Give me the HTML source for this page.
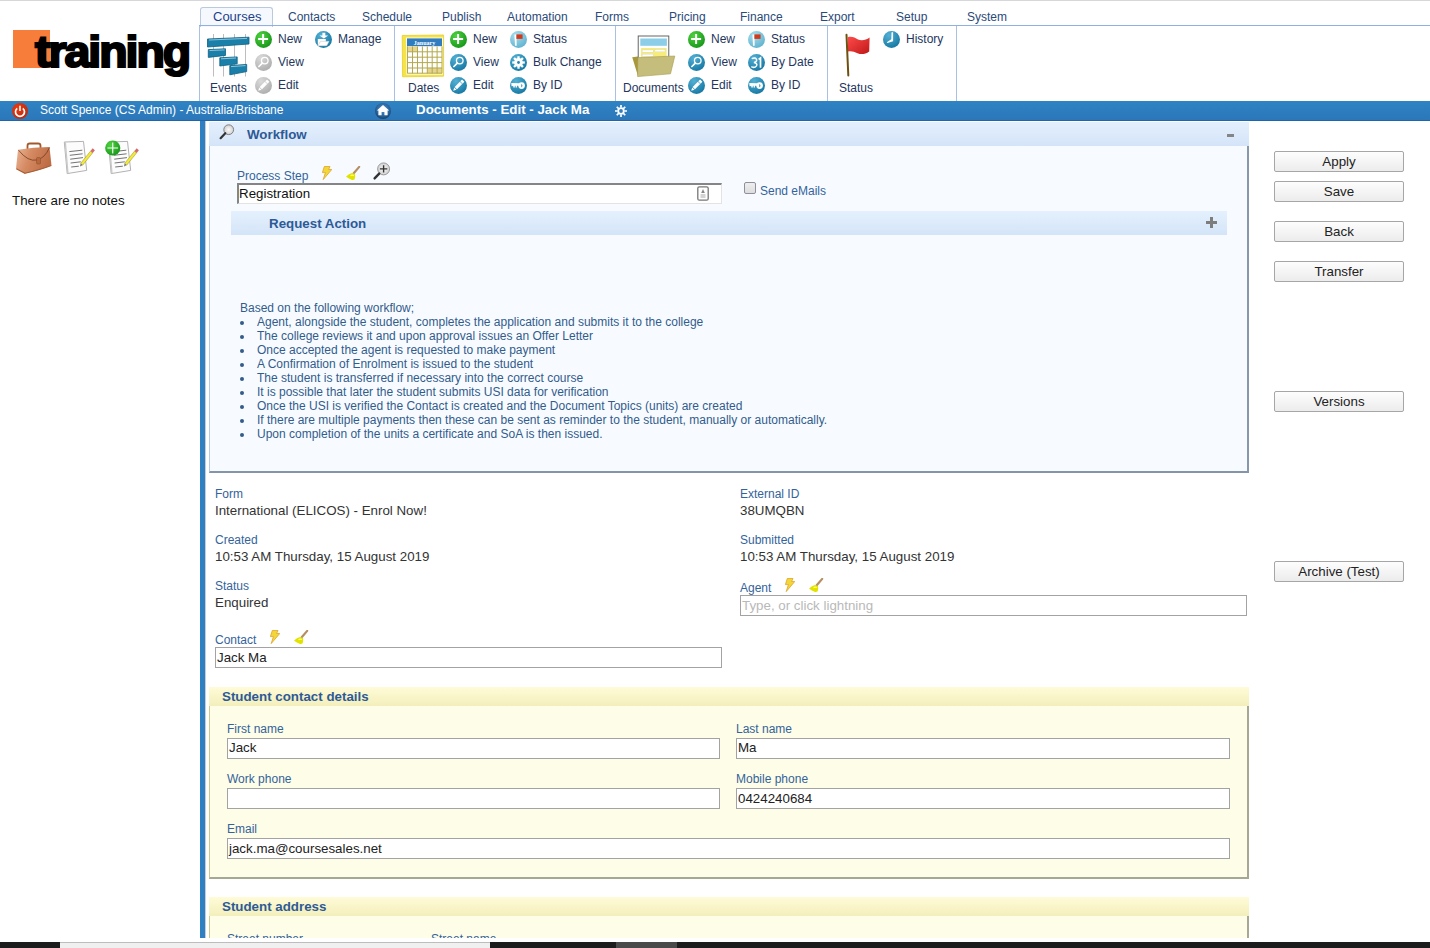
<!DOCTYPE html>
<html><head><meta charset="utf-8">
<style>
html,body{margin:0;padding:0;background:#fff;}
body{width:1430px;height:948px;overflow:hidden;position:relative;font-family:"Liberation Sans",sans-serif;}
.a{position:absolute;white-space:nowrap;}
.t12{font-size:12px;line-height:12px;}
.t13{font-size:13px;line-height:13px;}
.b13{font-size:13.333px;line-height:13px;font-weight:bold;}
.tab{color:#2b4a7a;}
.rb{color:#24365e;}
.lbl{color:#34639b;font-size:12px;line-height:12px;}
.val{color:#333;font-size:13.333px;line-height:13px;}
.wf{color:#335c8c;font-size:12px;line-height:12px;}
.hdr{color:#2d5a96;font-size:13.333px;line-height:13px;font-weight:bold;}
.sep{position:absolute;top:26px;height:75px;width:1px;background:#a9c0e2;}
.btn{position:absolute;left:1274px;width:128px;height:19px;border:1px solid #a6a6a6;border-radius:2px;background:linear-gradient(#fdfdfd,#ececec);font-size:13.333px;line-height:19px;text-align:center;color:#222;}
.inp{position:absolute;background:#fff;border:1px solid #a3a3a3;box-sizing:border-box;}
.inpv{position:absolute;color:#222;font-size:13.333px;line-height:13px;white-space:nowrap;}
svg.i{position:absolute;overflow:visible;}
</style></head><body>
<svg width="0" height="0" style="position:absolute">
<defs>
<radialGradient id="gG" cx="35%" cy="30%" r="75%"><stop offset="0" stop-color="#4fd23f"/><stop offset="1" stop-color="#17961a"/></radialGradient>
<radialGradient id="gB" cx="35%" cy="25%" r="80%"><stop offset="0" stop-color="#54b0d4"/><stop offset="1" stop-color="#1578a3"/></radialGradient>
<radialGradient id="gLB" cx="35%" cy="25%" r="80%"><stop offset="0" stop-color="#a9dcec"/><stop offset="1" stop-color="#5fb3d0"/></radialGradient>
<radialGradient id="gGr" cx="35%" cy="25%" r="80%"><stop offset="0" stop-color="#dadada"/><stop offset="1" stop-color="#adadad"/></radialGradient>
<radialGradient id="gR" cx="35%" cy="30%" r="80%"><stop offset="0" stop-color="#ee3a0c"/><stop offset="1" stop-color="#b52a12"/></radialGradient>
<radialGradient id="gH" cx="50%" cy="40%" r="60%"><stop offset="0" stop-color="#4a94cc"/><stop offset="0.7" stop-color="#2a639a"/><stop offset="1" stop-color="#173f66"/></radialGradient>
<linearGradient id="gFlag" x1="0" y1="0" x2="1" y2="1"><stop offset="0" stop-color="#ff4a4a"/><stop offset="1" stop-color="#c01818"/></linearGradient>
<radialGradient id="gMag" cx="50%" cy="50%" r="50%"><stop offset="0" stop-color="#fafafa"/><stop offset="1" stop-color="#d0d0d0"/></radialGradient>
<symbol id="cG" viewBox="0 0 17 17"><circle cx="8.5" cy="8.5" r="8.5" fill="url(#gG)"/><path d="M8.1 3v10M3.1 8h10" stroke="#fff" stroke-width="2"/></symbol>
<symbol id="cMagGr" viewBox="0 0 17 17"><circle cx="8.5" cy="8.5" r="8.5" fill="url(#gGr)"/><circle cx="9.75" cy="6.6" r="3.3" fill="none" stroke="#fff" stroke-width="1.3"/><path d="M7.3 9.2L3.9 12.5" stroke="#fff" stroke-width="1.7" stroke-linecap="round"/></symbol>
<symbol id="cEdGr" viewBox="0 0 17 17"><circle cx="8.5" cy="8.5" r="8.5" fill="url(#gGr)"/><g transform="translate(3.2 13.7) rotate(-45)" fill="#fff"><path d="M0 0L3.1 -1.6V1.6z"/><rect x="3.7" y="-1.65" width="7.3" height="3.3"/><rect x="11.6" y="-1.65" width="2.6" height="3.3"/></g></symbol>
<symbol id="cMag" viewBox="0 0 17 17"><circle cx="8.5" cy="8.5" r="8.5" fill="url(#gB)"/><circle cx="9.75" cy="6.6" r="3.3" fill="none" stroke="#fff" stroke-width="1.3"/><path d="M7.3 9.2L3.9 12.5" stroke="#fff" stroke-width="1.7" stroke-linecap="round"/></symbol>
<symbol id="cEd" viewBox="0 0 17 17"><circle cx="8.5" cy="8.5" r="8.5" fill="url(#gB)"/><g transform="translate(3.2 13.7) rotate(-45)" fill="#fff"><path d="M0 0L3.1 -1.6V1.6z"/><rect x="3.7" y="-1.65" width="7.3" height="3.3"/><rect x="11.6" y="-1.65" width="2.6" height="3.3"/></g></symbol>
<symbol id="cFlag" viewBox="0 0 17 17"><circle cx="8.5" cy="8.5" r="8.5" fill="url(#gLB)"/><path d="M4.4 3.4H6.4L6.7 14.7H5Z" fill="#fff"/><rect x="6.4" y="3.4" width="6.2" height="4.5" fill="#d33a1c"/></symbol>
<symbol id="cGear" viewBox="0 0 17 17"><circle cx="8.5" cy="8.5" r="8.5" fill="url(#gB)"/><g fill="#fff"><circle cx="8.5" cy="8.5" r="4.4"/><path id="gt" d="M7.35 2.2h2.3v3h-2.3z"/><use href="#gt" transform="rotate(45 8.5 8.5)"/><use href="#gt" transform="rotate(90 8.5 8.5)"/><use href="#gt" transform="rotate(135 8.5 8.5)"/><use href="#gt" transform="rotate(180 8.5 8.5)"/><use href="#gt" transform="rotate(225 8.5 8.5)"/><use href="#gt" transform="rotate(270 8.5 8.5)"/><use href="#gt" transform="rotate(315 8.5 8.5)"/></g><circle cx="8.5" cy="8.5" r="1.4" fill="#2586b0"/></symbol>
<symbol id="cKey" viewBox="0 0 17 17"><circle cx="8.5" cy="8.5" r="8.5" fill="url(#gB)"/><g fill="#fff"><ellipse cx="11.6" cy="8.6" rx="3.3" ry="3.4"/><path d="M1.3 5.9L9 6.3V8.8H7V10.6H5.6V8.8H4.8V10.4H3.3V8.9L1.5 9.3Z"/></g><path d="M11.3 6.9Q13.6 8.6 11.3 10.4Z" fill="#2586b0"/></symbol>
<symbol id="c31" viewBox="0 0 17 17"><circle cx="8.5" cy="8.5" r="8.5" fill="url(#gB)"/><path d="M3.7 4.6Q6 3.5 7.7 4.3Q9 5.2 8.6 6.8Q8 8.3 5.9 8.5Q8.2 8.7 8.8 10.3Q9.1 12.3 7.2 13.1Q5.2 13.8 3.3 12.7" fill="none" stroke="#fff" stroke-width="1.5"/><path d="M10.6 5.4L12.5 4V13.7" fill="none" stroke="#fff" stroke-width="1.7"/></symbol>
<symbol id="cClock" viewBox="0 0 17 17"><circle cx="8.5" cy="8.5" r="8.5" fill="url(#gB)"/><path d="M8.5 1.3H10.1V10.3L4.4 12.1 3.8 11.3 8.3 8.2Z" fill="#fff"/></symbol>
<symbol id="cManage" viewBox="0 0 17 17"><circle cx="8.5" cy="8.5" r="8.5" fill="url(#gB)"/><path d="M7.4 1.8H10.3V4.4H13.2L8.85 7.6 4.5 4.4H7.4Z" fill="#fff"/><path d="M2.8 8H10.8V14.7H2.8Z" fill="#fff"/><path d="M5.5 10.3H14.2L11.8 14.7H2.9Z" fill="#fff" stroke="#bdbdbd" stroke-width="0.5"/></symbol>
<symbol id="lightning" viewBox="0 0 10 14"><path d="M2.3 0.5H8L6.6 3.5H9.8L1.2 13.6 3.4 6.6H0.4Z" fill="#f3d63a" stroke="#dea42a" stroke-width="0.8" stroke-linejoin="round"/></symbol>
<symbol id="broom" viewBox="0 0 15 14"><path d="M13.2 0.9L7.7 7.3" stroke="#b68e62" stroke-width="2.2" stroke-linecap="round"/><path d="M0 10.6Q3 7.7 6 7.1L8.9 8Q9.6 11 8.5 13.5Q7 14.2 5.5 13.7Q2 12.6 0 10.6Z" fill="#e2e200"/><path d="M4.5 9.6Q6.5 8.8 7.8 9.6" stroke="#ffff70" stroke-width="1.2" fill="none"/></symbol>
</defs>
</svg>

<!-- top line -->
<div class="a" style="left:0;top:0;width:1430px;height:1px;background:#d6d7db"></div>

<!-- logo -->
<div class="a" style="left:13px;top:30px;width:37px;height:38px;background:#f77d3b"></div>
<div class="a" id="logo" style="left:35px;top:30px;font-size:50px;line-height:50px;font-weight:bold;color:#000;letter-spacing:-2.2px;-webkit-text-stroke:2.5px #000;transform-origin:0 0;transform:scale(0.93,0.87)">training</div>

<!-- tabs -->
<div class="a" style="left:200px;top:7px;width:71px;height:19px;border:1px solid #b9c9de;border-bottom:none;border-radius:3px 3px 0 0;background:#f5f9fe"></div>
<div class="a t13" style="left:213px;top:10px;color:#1d3f8c">Courses</div>
<div class="a t12 tab" style="left:288px;top:11px">Contacts</div>
<div class="a t12 tab" style="left:362px;top:11px">Schedule</div>
<div class="a t12 tab" style="left:442px;top:11px">Publish</div>
<div class="a t12 tab" style="left:507px;top:11px">Automation</div>
<div class="a t12 tab" style="left:595px;top:11px">Forms</div>
<div class="a t12 tab" style="left:669px;top:11px">Pricing</div>
<div class="a t12 tab" style="left:740px;top:11px">Finance</div>
<div class="a t12 tab" style="left:820px;top:11px">Export</div>
<div class="a t12 tab" style="left:896px;top:11px">Setup</div>
<div class="a t12 tab" style="left:967px;top:11px">System</div>

<!-- ribbon -->
<div class="a" style="left:199px;top:25px;width:1231px;height:1px;background:#8fb0e2"></div>
<div class="sep" style="left:199px"></div>
<div class="sep" style="left:394px"></div>
<div class="sep" style="left:615px"></div>
<div class="sep" style="left:827px"></div>
<div class="sep" style="left:956px"></div>

<!-- Events group -->
<svg class="i" style="left:204px;top:30px" width="50" height="50" viewBox="0 0 50 50">
<g stroke="#bdbdbd" stroke-width="1"><path d="M9.5 4v42.5M19.5 4v42.5M30.5 4v42.5M41.5 4v42.5"/></g>
<g fill="#1a80aa" stroke="#0d5f82" stroke-width="0.8">
<path d="M3.5 9l41.5-1.8v6.8L3.5 17z"/>
<path d="M4.3 19.6l17.2-0.8v6.6L4.3 27.4z"/>
<path d="M15.8 27.8l17.4-0.9v6.9L15.8 36z"/>
<path d="M25.8 35.6l16.9-1.2v7.2L25.8 44.8z"/>
</g>
<g stroke="#bde3f2" stroke-width="0.7" fill="none"><path d="M5 10l38-1.6M5.5 20.5l15-0.6M17 28.8l15-0.8M27 36.6l14.5-1"/></g>
</svg>
<div class="a t12 rb" style="left:210px;top:82px">Events</div>
<svg class="i" style="left:255px;top:31px" width="17" height="17"><use href="#cG"/></svg>
<svg class="i" style="left:255px;top:54px" width="17" height="17"><use href="#cMagGr"/></svg>
<svg class="i" style="left:255px;top:77px" width="17" height="17"><use href="#cEdGr"/></svg>
<div class="a t12 rb" style="left:278px;top:33px">New</div>
<div class="a t12 rb" style="left:278px;top:56px">View</div>
<div class="a t12 rb" style="left:278px;top:79px">Edit</div>
<svg class="i" style="left:315px;top:31px" width="17" height="17"><use href="#cManage"/></svg>
<div class="a t12 rb" style="left:338px;top:33px">Manage</div>

<!-- Dates group -->
<svg class="i" style="left:398px;top:30px" width="50" height="50" viewBox="0 0 50 50">
<path d="M4.2 5.5L45.6 5v41.2L4.6 46.8z" fill="#f4e34a" stroke="#e6cf28" stroke-width="0.8"/>
<path d="M8 7.6h37v37.2H8.4z" fill="#fffbe0"/>
<rect x="9" y="8.4" width="35" height="8" fill="#2f7cc0"/>
<text x="26.5" y="14.6" font-family="Liberation Serif" font-weight="bold" font-size="6" fill="#fff" text-anchor="middle">January</text>
<rect x="9.5" y="16.4" width="34.5" height="27" fill="#fff"/>
<rect x="9.5" y="16.4" width="10" height="5.4" fill="#e5d590"/>
<rect x="29.3" y="37.8" width="14.7" height="5.4" fill="#e5d590"/>
<g stroke="#b3a94c" stroke-width="1"><path d="M9.5 16.4v27M14.5 16.4v27M19.5 16.4v27M24.4 16.4v27M29.3 16.4v27M34.2 16.4v27M39.1 16.4v27M44 16.4v27M9.5 21.8h34.5M9.5 27.2h34.5M9.5 32.6h34.5M9.5 38h34.5M9.5 43.2h34.5"/></g>
</svg>
<div class="a t12 rb" style="left:408px;top:82px">Dates</div>
<svg class="i" style="left:450px;top:31px" width="17" height="17"><use href="#cG"/></svg>
<svg class="i" style="left:450px;top:54px" width="17" height="17"><use href="#cMag"/></svg>
<svg class="i" style="left:450px;top:77px" width="17" height="17"><use href="#cEd"/></svg>
<div class="a t12 rb" style="left:473px;top:33px">New</div>
<div class="a t12 rb" style="left:473px;top:56px">View</div>
<div class="a t12 rb" style="left:473px;top:79px">Edit</div>
<svg class="i" style="left:510px;top:31px" width="17" height="17"><use href="#cFlag"/></svg>
<svg class="i" style="left:510px;top:54px" width="17" height="17"><use href="#cGear"/></svg>
<svg class="i" style="left:510px;top:77px" width="17" height="17"><use href="#cKey"/></svg>
<div class="a t12 rb" style="left:533px;top:33px">Status</div>
<div class="a t12 rb" style="left:533px;top:56px">Bulk Change</div>
<div class="a t12 rb" style="left:533px;top:79px">By ID</div>

<!-- Documents group -->
<svg class="i" style="left:628px;top:30px" width="50" height="50" viewBox="0 0 50 50">
<path d="M4.2 27.2L10 26.6 10 46z" fill="#a8983a"/>
<rect x="10.2" y="6" width="30.6" height="24" fill="#fff" stroke="#555" stroke-width="0.9"/>
<rect x="12.3" y="8.5" width="26.6" height="7.3" fill="#8ccde8"/>
<rect x="13" y="18" width="25.6" height="9.5" fill="#f6ec7c"/>
<rect x="14.2" y="20" width="11" height="2.2" fill="#fff" stroke="#ccc" stroke-width="0.3"/>
<rect x="27" y="19.6" width="10" height="2.2" fill="#fff" stroke="#ccc" stroke-width="0.3"/>
<rect x="14.2" y="24.2" width="11" height="2.2" fill="#fff" stroke="#ccc" stroke-width="0.3"/>
<path d="M9.8 27.6L46.8 26 42.5 43.8 9.6 46.6z" fill="#c5bd7c" stroke="#a89a48" stroke-width="0.6"/>
</svg>
<div class="a t12 rb" style="left:623px;top:82px">Documents</div>
<svg class="i" style="left:688px;top:31px" width="17" height="17"><use href="#cG"/></svg>
<svg class="i" style="left:688px;top:54px" width="17" height="17"><use href="#cMag"/></svg>
<svg class="i" style="left:688px;top:77px" width="17" height="17"><use href="#cEd"/></svg>
<div class="a t12 rb" style="left:711px;top:33px">New</div>
<div class="a t12 rb" style="left:711px;top:56px">View</div>
<div class="a t12 rb" style="left:711px;top:79px">Edit</div>
<svg class="i" style="left:748px;top:31px" width="17" height="17"><use href="#cFlag"/></svg>
<svg class="i" style="left:748px;top:54px" width="17" height="17"><use href="#c31"/></svg>
<svg class="i" style="left:748px;top:77px" width="17" height="17"><use href="#cKey"/></svg>
<div class="a t12 rb" style="left:771px;top:33px">Status</div>
<div class="a t12 rb" style="left:771px;top:56px">By Date</div>
<div class="a t12 rb" style="left:771px;top:79px">By ID</div>

<!-- Status group -->
<svg class="i" style="left:836px;top:30px" width="44" height="50" viewBox="0 0 44 50">
<path d="M11.8 7.2C16 6 19 7.8 22 9.4 26 11.2 30 9.8 33.6 7.4L33.2 21.4C29.5 24 25.5 25 21.5 23.2 18 21.6 15 20.5 11.8 21.6z" fill="url(#gFlag)"/>
<path d="M10.5 4.8L12.3 45.5" stroke="#6e5010" stroke-width="2" stroke-linecap="round"/>
</svg>
<div class="a t12 rb" style="left:839px;top:82px">Status</div>
<svg class="i" style="left:883px;top:31px" width="17" height="17"><use href="#cClock"/></svg>
<div class="a t12 rb" style="left:906px;top:33px">History</div>

<!-- blue bar -->
<div class="a" style="left:0;top:101px;width:1430px;height:20px;background:linear-gradient(#2f84c4,#2b76b8)"></div>
<div class="a" style="left:0;top:120px;width:1430px;height:1px;background:#1f66a8"></div>
<svg class="i" style="left:12px;top:103px" width="16" height="16" viewBox="0 0 16 16"><circle cx="8" cy="8" r="8" fill="url(#gR)"/><path d="M5.2 5.3A4.5 4.5 0 1 0 10.8 5.3" fill="none" stroke="#fff" stroke-width="1.7"/><path d="M8 2.8v5.2" stroke="#fff" stroke-width="1.6"/></svg>
<div class="a t12" style="left:40px;top:104px;color:#fff">Scott Spence (CS Admin) - Australia/Brisbane</div>
<svg class="i" style="left:375px;top:103px" width="16" height="16" viewBox="0 0 16 16"><circle cx="8" cy="8" r="8" fill="url(#gH)"/><path d="M8 2L1.8 7.6H3.4V12.3H6.6V8.9H9.4V12.3H12.6V7.6H14.2Z" fill="#fff"/></svg>
<div class="a b13" style="left:416px;top:103px;color:#fff">Documents - Edit - Jack Ma</div>
<svg class="i" style="left:615px;top:105px" width="12" height="12" viewBox="0 0 12 12"><g fill="#fff"><circle cx="6" cy="6" r="3.7"/><path d="M5.15 0h1.7v2.6H5.15zM5.15 9.4h1.7V12H5.15zM0 5.15h2.6v1.7H0zM9.4 5.15H12v1.7H9.4z"/><path d="M5.15 0h1.7v2.6H5.15zM5.15 9.4h1.7V12H5.15zM0 5.15h2.6v1.7H0zM9.4 5.15H12v1.7H9.4z" transform="rotate(45 6 6)"/></g><circle cx="6" cy="6" r="1.9" fill="#2e80c1"/></svg>

<!-- left sidebar -->
<div class="a" style="left:200px;top:121px;width:5px;height:817px;background:#2e80c2"></div>
<div class="a" style="left:205px;top:121px;width:1px;height:817px;background:#c9ccd6"></div>
<svg class="i" style="left:0;top:130px" width="60" height="50" viewBox="0 130 60 50">
<defs><linearGradient id="gBrief" x1="0" y1="0" x2="1" y2="0.3"><stop offset="0" stop-color="#eab697"/><stop offset="0.45" stop-color="#d58a62"/><stop offset="1" stop-color="#bf6d45"/></linearGradient></defs>
<path d="M27.5 149.5V145.8Q27.5 143.5 29.8 143.5H38.2Q40.5 143.5 40.5 145.8V148.5" fill="none" stroke="#a3582c" stroke-width="1.8"/>
<path d="M18 149.8Q33 147.2 49.5 147L51.5 165.5Q40 170 25 173.5L16 168.5Z" fill="url(#gBrief)"/>
<path d="M18.5 150.2Q28 162 37 160Q45 158 49.5 147.5" fill="none" stroke="#6e3e1e" stroke-width="0.8"/>
<rect x="36.5" y="157.5" width="4" height="6.5" rx="1" fill="#b8683c" stroke="#8a4a24" stroke-width="0.5"/>
<path d="M16.3 168.7L25 173.3Q40 170 51.3 165.6" fill="none" stroke="#a85e36" stroke-width="1.1"/>
</svg>
<svg class="i" style="left:0;top:130px" width="150" height="50" viewBox="0 130 150 50">
<g id="note1">
<path d="M64.3 142L83.5 141.4 86.7 170.4 67.2 173.6Z" fill="#fcfcfc" stroke="#a9a9a9" stroke-width="0.9"/>
<path d="M64.6 142.2L66 142.2 68.6 173.2 67.3 173.4Z" fill="#c9c9c9"/>
<g stroke="#6c6c6c" stroke-width="0.95"><path d="M69.3 151.6L82.3 150.2M69.8 155.3L82.6 153.8M70.2 159.2L83 157.6M70.6 163L80.8 161.8M71.2 167L78.8 166.2"/></g>
<g transform="translate(80 166.4) rotate(-51.25)"><path d="M0 0L2.8 -1.35V1.35Z" fill="#707070"/><rect x="2.8" y="-1.35" width="15.7" height="2.7" fill="#f3ea3a" stroke="#9a9030" stroke-width="0.5"/><rect x="18.5" y="-1.45" width="3.5" height="2.9" fill="#d66a6a"/></g>
</g>
<use href="#note1" transform="translate(44 0)"/>
<circle cx="112.75" cy="148" r="7.6" fill="url(#gG)"/><path d="M112.75 142.6v10.8M107.4 148h10.7" stroke="#fff" stroke-width="1.1"/>
</svg>
<div class="a val" style="left:12px;top:194px;color:#111">There are no notes</div>

<!-- Workflow panel -->
<div class="a" style="left:209px;top:122px;width:1040px;height:24px;background:linear-gradient(#e4f0fd,#d4e4f8)"></div>
<div class="a" style="left:209px;top:146px;width:1037px;height:325px;background:#f7fbff;border-left:1px solid #b7c9e4;border-right:2px solid #8898ab;border-bottom:2px solid #8495a8"></div>
<svg class="i" style="left:218px;top:123px" width="18" height="18" viewBox="0 0 18 18"><circle cx="10.7" cy="6.7" r="4.9" fill="url(#gMag)" stroke="#777" stroke-width="0.9"/><path d="M7.3 10.2L2.6 15.2" stroke="#333" stroke-width="2.2" stroke-linecap="round"/></svg>
<div class="a hdr" style="left:247px;top:128px">Workflow</div>
<div class="a" style="left:1227px;top:134px;width:7px;height:3px;background:#858585"></div>

<div class="a lbl" style="left:237px;top:170px">Process Step</div>
<svg class="i" style="left:322px;top:166px" width="10" height="14"><use href="#lightning"/></svg>
<svg class="i" style="left:346px;top:166px" width="15" height="14"><use href="#broom"/></svg>
<svg class="i" style="left:372px;top:161px" width="20" height="20" viewBox="0 0 20 20"><circle cx="11.6" cy="7.9" r="6" fill="url(#gMag)" stroke="#888" stroke-width="0.8"/><path d="M11.6 4.2v7.4M7.9 7.9h7.4" stroke="#333" stroke-width="1.4"/><path d="M7.2 12.6L2.6 17.4" stroke="#333" stroke-width="2.4" stroke-linecap="round"/></svg>
<div class="a" style="left:237px;top:183px;width:485px;height:21px;background:#fff;box-sizing:border-box;border-top:2px solid #858585;border-left:2px solid #858585;border-right:1px solid #e3e3e3;border-bottom:1px solid #e3e3e3"></div>
<div class="a val" style="left:239px;top:187px;color:#111">Registration</div>
<svg class="i" style="left:697px;top:186px" width="12" height="15" viewBox="0 0 12 15"><rect x="0.8" y="0.8" width="10.4" height="13.4" rx="1.5" fill="#fff" stroke="#777" stroke-width="1.3"/><path d="M6 3l-1.8 4h3.6z" fill="#888"/><rect x="3.5" y="8.5" width="5" height="1" fill="#aaa"/><rect x="3.5" y="10.5" width="5" height="1" fill="#aaa"/></svg>
<div class="a" style="left:744px;top:182px;width:10px;height:10px;border:1px solid #8f8f9d;border-radius:2px;background:linear-gradient(#eee,#ddd)"></div>
<div class="a lbl" style="left:760px;top:185px">Send eMails</div>

<div class="a" style="left:231px;top:211px;width:996px;height:24px;background:linear-gradient(#e4f0fd,#d4e4f8)"></div>
<div class="a hdr" style="left:269px;top:217px">Request Action</div>
<div class="a" style="left:1206px;top:221px;width:11px;height:3px;background:#7d7d7d"></div>
<div class="a" style="left:1210px;top:217px;width:3px;height:11px;background:#7d7d7d"></div>

<div class="a wf" style="left:240px;top:302px">Based on the following workflow;</div>
<div class="a" style="left:240px;top:321px;width:4px;height:4px;border-radius:2px;background:#335c8c"></div><div class="a wf" style="left:257px;top:316px">Agent, alongside the student, completes the application and submits it to the college</div>
<div class="a" style="left:240px;top:335px;width:4px;height:4px;border-radius:2px;background:#335c8c"></div><div class="a wf" style="left:257px;top:330px">The college reviews it and upon approval issues an Offer Letter</div>
<div class="a" style="left:240px;top:349px;width:4px;height:4px;border-radius:2px;background:#335c8c"></div><div class="a wf" style="left:257px;top:344px">Once accepted the agent is requested to make payment</div>
<div class="a" style="left:240px;top:363px;width:4px;height:4px;border-radius:2px;background:#335c8c"></div><div class="a wf" style="left:257px;top:358px">A Confirmation of Enrolment is issued to the student</div>
<div class="a" style="left:240px;top:377px;width:4px;height:4px;border-radius:2px;background:#335c8c"></div><div class="a wf" style="left:257px;top:372px">The student is transferred if necessary into the correct course</div>
<div class="a" style="left:240px;top:391px;width:4px;height:4px;border-radius:2px;background:#335c8c"></div><div class="a wf" style="left:257px;top:386px">It is possible that later the student submits USI data for verification</div>
<div class="a" style="left:240px;top:405px;width:4px;height:4px;border-radius:2px;background:#335c8c"></div><div class="a wf" style="left:257px;top:400px">Once the USI is verified the Contact is created and the Document Topics (units) are created</div>
<div class="a" style="left:240px;top:419px;width:4px;height:4px;border-radius:2px;background:#335c8c"></div><div class="a wf" style="left:257px;top:414px">If there are multiple payments then these can be sent as reminder to the student, manually or automatically.</div>
<div class="a" style="left:240px;top:433px;width:4px;height:4px;border-radius:2px;background:#335c8c"></div><div class="a wf" style="left:257px;top:428px">Upon completion of the units a certificate and SoA is then issued.</div>

<!-- fields -->
<div class="a lbl" style="left:215px;top:488px">Form</div>
<div class="a val" style="left:215px;top:504px">International (ELICOS) - Enrol Now!</div>
<div class="a lbl" style="left:740px;top:488px">External ID</div>
<div class="a val" style="left:740px;top:504px">38UMQBN</div>
<div class="a lbl" style="left:215px;top:534px">Created</div>
<div class="a val" style="left:215px;top:550px">10:53 AM Thursday, 15 August 2019</div>
<div class="a lbl" style="left:740px;top:534px">Submitted</div>
<div class="a val" style="left:740px;top:550px">10:53 AM Thursday, 15 August 2019</div>
<div class="a lbl" style="left:215px;top:580px">Status</div>
<div class="a val" style="left:215px;top:596px">Enquired</div>
<div class="a lbl" style="left:740px;top:582px">Agent</div>
<svg class="i" style="left:785px;top:578px" width="10" height="14"><use href="#lightning"/></svg>
<svg class="i" style="left:809px;top:578px" width="15" height="14"><use href="#broom"/></svg>
<div class="inp" style="left:740px;top:595px;width:507px;height:21px"></div>
<div class="inpv" style="left:742px;top:599px;color:#b9b9b9">Type, or click lightning</div>
<div class="a lbl" style="left:215px;top:634px">Contact</div>
<svg class="i" style="left:270px;top:630px" width="10" height="14"><use href="#lightning"/></svg>
<svg class="i" style="left:294px;top:630px" width="15" height="14"><use href="#broom"/></svg>
<div class="inp" style="left:215px;top:647px;width:507px;height:21px"></div>
<div class="inpv" style="left:217px;top:651px">Jack Ma</div>

<!-- Student contact details -->
<div class="a" style="left:209px;top:687px;width:1040px;height:19px;background:linear-gradient(#fffbd8,#f3efbb)"></div>
<div class="a" style="left:209px;top:706px;width:1037px;height:171px;background:#fefde8;border-left:1px solid #cdc88f;border-right:2px solid #a6a894;border-bottom:2px solid #a6a894"></div>
<div class="a hdr" style="left:222px;top:690px">Student contact details</div>
<div class="a lbl" style="left:227px;top:723px">First name</div>
<div class="inp" style="left:227px;top:738px;width:493px;height:21px"></div>
<div class="inpv" style="left:229px;top:741px">Jack</div>
<div class="a lbl" style="left:736px;top:723px">Last name</div>
<div class="inp" style="left:736px;top:738px;width:494px;height:21px"></div>
<div class="inpv" style="left:738px;top:741px">Ma</div>
<div class="a lbl" style="left:227px;top:773px">Work phone</div>
<div class="inp" style="left:227px;top:788px;width:493px;height:21px"></div>
<div class="a lbl" style="left:736px;top:773px">Mobile phone</div>
<div class="inp" style="left:736px;top:788px;width:494px;height:21px"></div>
<div class="inpv" style="left:738px;top:792px">0424240684</div>
<div class="a lbl" style="left:227px;top:823px">Email</div>
<div class="inp" style="left:227px;top:838px;width:1003px;height:21px"></div>
<div class="inpv" style="left:229px;top:842px">jack.ma@coursesales.net</div>

<!-- Student address (clipped) -->
<div class="a" style="left:0;top:0;width:1430px;height:938px;overflow:hidden;pointer-events:none">
<div class="a" style="left:209px;top:897px;width:1040px;height:19px;background:linear-gradient(#fffbd8,#f3efbb)"></div>
<div class="a" style="left:209px;top:916px;width:1037px;height:60px;background:#fefde8;border-left:1px solid #cdc88f;border-right:2px solid #a6a894"></div>
<div class="a hdr" style="left:222px;top:900px">Student address</div>
<div class="a lbl" style="left:227px;top:933px">Street number</div>
<div class="a lbl" style="left:431px;top:933px">Street name</div>
</div>

<!-- buttons -->
<div class="btn" style="top:151px">Apply</div>
<div class="btn" style="top:181px">Save</div>
<div class="btn" style="top:221px">Back</div>
<div class="btn" style="top:261px">Transfer</div>
<div class="btn" style="top:391px">Versions</div>
<div class="btn" style="top:561px">Archive (Test)</div>

<!-- bottom bar -->
<div class="a" style="left:0;top:942px;width:1430px;height:6px;background:#1c1c1c"></div>
<div class="a" style="left:60px;top:942px;width:430px;height:6px;background:#f0f0f0;border-top:1px solid #bdbdbd;box-sizing:border-box"></div>
<div class="a" style="left:616px;top:942px;width:61px;height:6px;background:#4a4a4a"></div>
</body></html>
